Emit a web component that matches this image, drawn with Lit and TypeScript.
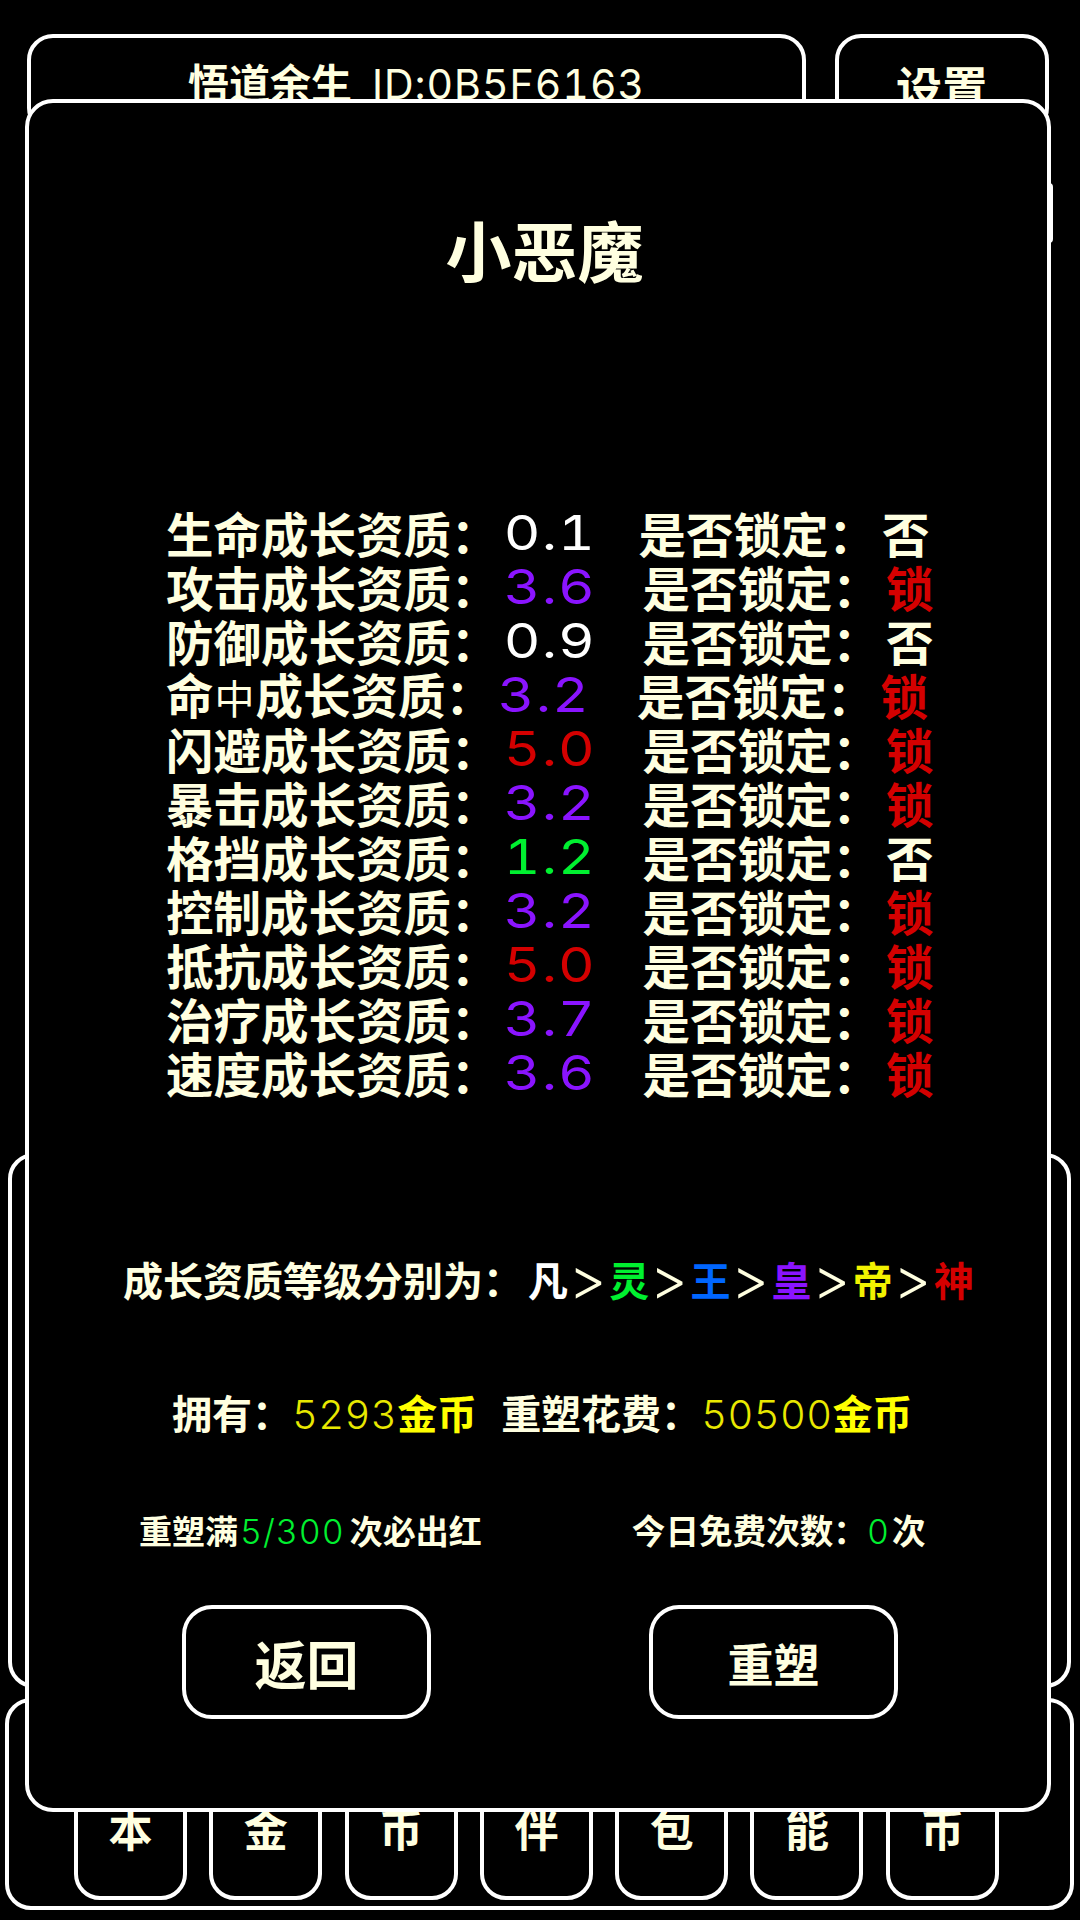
import { LitElement, html, css } from "lit";
import { customElement } from "lit/decorators.js";

interface Row { name: string; value: string; tone: string; locked: boolean; tight?: boolean; }

const ROWS: Row[] = [
  { name: "生命", value: "0.1", tone: "white", locked: false, tight: true },
  { name: "攻击", value: "3.6", tone: "purple", locked: true },
  { name: "防御", value: "0.9", tone: "white", locked: false },
  { name: "命|中", value: "3.2", tone: "purple", locked: true },
  { name: "闪避", value: "5.0", tone: "red", locked: true },
  { name: "暴击", value: "3.2", tone: "purple", locked: true },
  { name: "格挡", value: "1.2", tone: "green", locked: false },
  { name: "控制", value: "3.2", tone: "purple", locked: true },
  { name: "抵抗", value: "5.0", tone: "red", locked: true },
  { name: "治疗", value: "3.7", tone: "purple", locked: true },
  { name: "速度", value: "3.6", tone: "purple", locked: true },
];

const TIERS: [string, string][] = [
  ["凡", "white"], ["灵", "green"], ["王", "blue"], ["皇", "purple"], ["帝", "yellow"], ["神", "red"],
];

const TABS = ["本", "金", "币", "伴", "包", "能", "币"];

@customElement("app-root")
export class AppRoot extends LitElement {
  static styles = css`
    :host {
      display: block;
      position: relative;
      width: 1080px;
      height: 1920px;
      overflow: hidden;
      background: #000;
      color: #ffffe0;
      font-family: "Noto Sans CJK SC", sans-serif;
      font-weight: 700;
    }
    .num { font-family: Inter, "Liberation Sans", sans-serif; font-weight: 300; font-variant-numeric: tabular-nums; }
    .white { color: #ffffff; }
    .purple { color: #8a14ff; }
    .red { color: #d40000; }
    .green { color: #00f030; }
    .blue { color: #0066ff; }
    .yellow { color: #f2f200; }
    .box { box-sizing: border-box; border: 4px solid #fff; background: #000; }

    .base { display: flex; flex-direction: column; padding-top: 34px; }
    .head { display: flex; height: 100px; padding-left: 27px; gap: 29px; }
    .name-box {
      width: 779px; border-radius: 26px; text-align: center;
      padding-top: 18px; font-size: 41px; line-height: 50px; white-space: nowrap;
    }
    .name-box .num { font-size: 41px; letter-spacing: 1px; margin-left: 20px; font-weight: 400; }
    .set-box {
      width: 214px; border-radius: 26px; text-align: center;
      padding-top: 20px; font-size: 46px; line-height: 54px;
    }
    .strip { align-self: flex-end; width: 200px; height: 60px; margin: 49px 27px 0 0; border-radius: 4px; }
    .panel { width: 1063px; height: 535px; margin: 910px 0 0 8px; border-radius: 26px; }
    .dock {
      display: flex; align-items: flex-end; gap: 22.3px;
      width: 1069px; height: 212px; margin: 10px 0 0 5px;
      padding: 0 0 6px 65px; border-radius: 26px;
    }
    .tab {
      width: 113px; height: 144px; border-radius: 26px;
      display: flex; align-items: center; justify-content: center;
      font-size: 44px; line-height: 50px; flex: none;
    }

    .modal {
      position: absolute; left: 25px; top: 99px; width: 1026px; height: 1713px;
      border-radius: 28px; display: flex; flex-direction: column;
    }
    .title { margin-top: 110px; padding-left: 13px; height: 70px; text-align: center; font-size: 66px; line-height: 70px; }
    .rows { display: flex; flex-direction: column; margin-top: 223px; padding-left: 137px; }
    .row { display: flex; align-items: center; height: 54px; font-size: 47.5px; line-height: 54px; white-space: nowrap; }
    .small { display: inline-block; width: 42px; font-size: 40px; font-weight: 400; text-align: center; }
    .val {
      box-sizing: border-box; flex: none; width: 146px; padding-left: 4px;
      font-size: 48px; font-weight: 400; letter-spacing: 1px;
      transform: scaleX(1.18); transform-origin: left center;
    }
    .val-wrap { flex: none; width: 144px; }
    .val-wrap.tight { width: 140px; }
    .mark { margin-left: 6px; }
    .tiers { display: flex; align-items: center; height: 50px; margin-top: 154px; padding-left: 94px; font-size: 40px; line-height: 50px; white-space: nowrap; }
    .tier-label { margin-right: 5px; }
    .gt { font-size: 58px; width: 41.2px; text-align: center; color: #ffffe0; font-weight: 300; }
    .own { height: 50px; margin-top: 83px; padding-left: 143px; font-size: 40px; line-height: 50px; white-space: nowrap; }
    .own .num { font-size: 40px; letter-spacing: 0.4px; color: #e8e800; }
    .own .coin { color: #ffff00; }
    .own .spend { margin-left: 24px; }
    .meta { display: flex; height: 40px; margin-top: 73px; padding-left: 110px; font-size: 33px; line-height: 40px; white-space: nowrap; }
    .meta .num { font-size: 34px; letter-spacing: 1px; margin: 0 5px 0 2px; }
    .meta .right { margin-left: 150px; font-size: 33.6px; }
    .meta .right .num { margin: 0 2px 0 0; }
    .actions { display: flex; gap: 218px; margin-top: 55px; padding-left: 153px; }
    .btn {
      width: 249px; height: 114px; border-radius: 30px;
      display: flex; align-items: center; justify-content: center;
    }
    .btn.back { font-size: 52px; }
    .btn.go { font-size: 46px; }
  `;

  private renderName(name: string) {
    if (!name.includes("|")) return name;
    const [a, b] = name.split("|");
    return html`${a}<span class="small">${b}</span>`;
  }

  render() {
    return html`
      <div class="base">
        <div class="head">
          <div class="box name-box">悟道余生<span class="num">ID:0B5F6163</span></div>
          <div class="box set-box">设置</div>
        </div>
        <div class="box strip"></div>
        <div class="box panel"></div>
        <div class="box dock">
          ${TABS.map((t) => html`<div class="box tab">${t}</div>`)}
        </div>
      </div>

      <div class="box modal">
        <div class="title">小恶魔</div>
        <div class="rows">
          ${ROWS.map((r) => html`
            <div class="row">
              <span>${this.renderName(r.name)}成长资质：</span>
              <div class="val-wrap ${r.tight ? "tight" : ""}"><div class="num val ${r.tone}">${r.value}</div></div>
              <span>是否锁定：</span>
              <span class="mark ${r.locked ? "red" : ""}">${r.locked ? "锁" : "否"}</span>
            </div>`)}
        </div>
        <div class="tiers">
          <span class="tier-label">成长资质等级分别为：</span>
          ${TIERS.map(([t, tone], i) => html`
            ${i > 0 ? html`<span class="num gt">&gt;</span>` : ""}
            <span class=${tone}>${t}</span>`)}
        </div>
        <div class="own">拥有：<span class="num">5293</span><span class="coin">金币</span><span class="spend">重塑花费：</span><span class="num">50500</span><span class="coin">金币</span></div>
        <div class="meta">
          <span>重塑满<span class="num green">5/300</span>次必出红</span>
          <span class="right">今日免费次数：<span class="num green">0</span>次</span>
        </div>
        <div class="actions">
          <div class="box btn back">返回</div>
          <div class="box btn go">重塑</div>
        </div>
      </div>
    `;
  }
}
